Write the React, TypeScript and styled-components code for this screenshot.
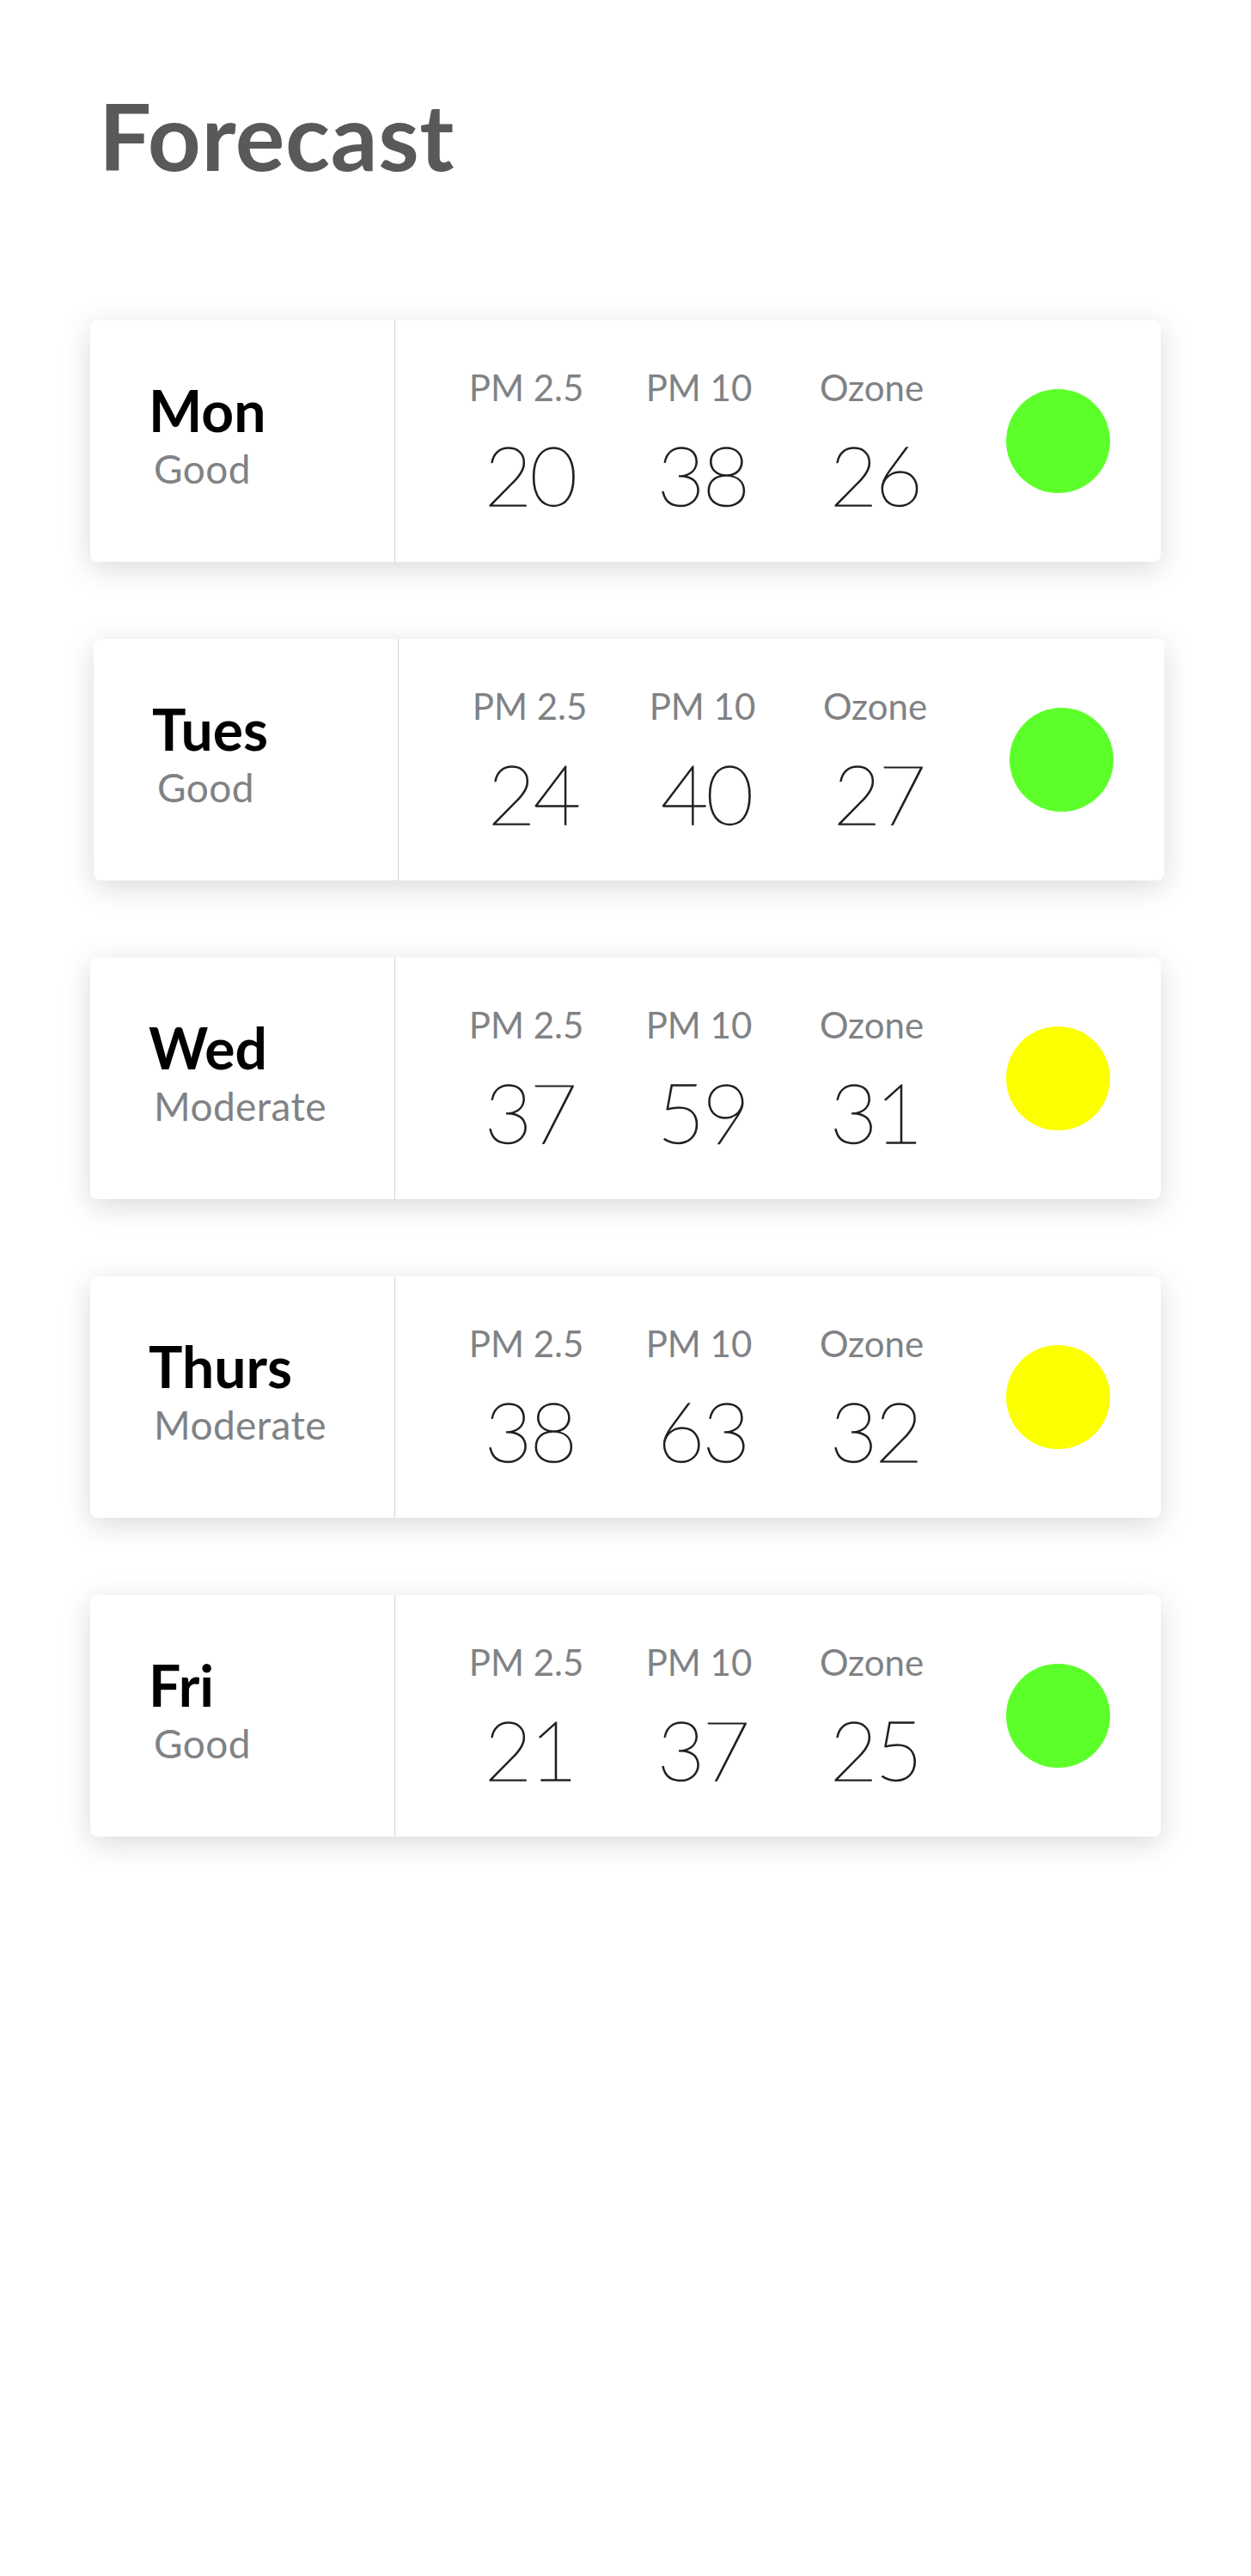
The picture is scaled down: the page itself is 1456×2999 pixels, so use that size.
import React from "react";
import styled, { createGlobalStyle } from "styled-components";

const GlobalStyle = createGlobalStyle`
  html, body {
    margin: 0;
    padding: 0;
    background: #ffffff;
  }
  body {
    font-family: "Lato", "Noto Sans", sans-serif;
  }
  * { box-sizing: border-box; }
`;

const Page = styled.div`
  width: 1456px;
  min-height: 2999px;
  padding: 103px 0 0 105px;
`;

const Title = styled.h1`
  margin: 0 0 162px 10px;
  font-family: "Lato", sans-serif;
  font-weight: 700;
  font-size: 108px;
  line-height: 1;
  color: #58595b;
  letter-spacing: 0.6px;
`;

const CardList = styled.div`
  display: flex;
  flex-direction: column;
  gap: 90px;
`;

const Card = styled.div<{ $shift?: number }>`
  display: flex;
  width: 1246px;
  height: 281px;
  margin-left: ${(p) => p.$shift ?? 0}px;
  background: #ffffff;
  border-radius: 8px;
  box-shadow: 0 8px 34px rgba(0, 0, 0, 0.15);
  overflow: hidden;
`;

const DaySection = styled.div`
  width: 355px;
  flex: none;
  padding: 72px 0 0 68px;
  border-right: 1px solid #d4d5d6;
  display: flex;
  flex-direction: column;
`;

const DayName = styled.div`
  font-family: "Lato", sans-serif;
  font-weight: 700;
  font-size: 66px;
  line-height: 1;
  color: #000000;
`;

const Quality = styled.div`
  margin: 12px 0 0 6px;
  font-family: "Lato", sans-serif;
  font-weight: 400;
  font-size: 46px;
  line-height: 1;
  letter-spacing: 0.4px;
  color: #808285;
`;

const Readings = styled.div`
  flex: 1;
  display: flex;
  align-items: flex-start;
  padding: 57px 59px 0 52px;
`;

const Metric = styled.div`
  width: 201px;
  display: flex;
  flex-direction: column;
  align-items: center;
`;

const MetricLabel = styled.div`
  font-family: "Lato", sans-serif;
  font-weight: 400;
  font-size: 42px;
  line-height: 1;
  color: #808285;
  white-space: nowrap;
`;

const MetricValue = styled.div`
  margin-top: 32px;
  padding-left: 8px;
  font-family: "Lato", sans-serif;
  font-weight: 200;
  font-size: 96px;
  line-height: 1;
  letter-spacing: -3px;
  color: #231f20;
  -webkit-text-stroke: 1.4px #231f20;
`;

const StatusDot = styled.div<{ $color: string }>`
  margin-left: auto;
  align-self: center;
  margin-top: -57px;
  width: 121px;
  height: 121px;
  border-radius: 50%;
  background: ${(p) => p.$color};
`;

type Day = {
  name: string;
  quality: string;
  pm25: number;
  pm10: number;
  ozone: number;
  color: string;
  shift?: number;
};

const GREEN = "#5dff2b";
const YELLOW = "#fcff00";

const days: Day[] = [
  { name: "Mon", quality: "Good", pm25: 20, pm10: 38, ozone: 26, color: GREEN },
  { name: "Tues", quality: "Good", pm25: 24, pm10: 40, ozone: 27, color: GREEN, shift: 4 },
  { name: "Wed", quality: "Moderate", pm25: 37, pm10: 59, ozone: 31, color: YELLOW },
  { name: "Thurs", quality: "Moderate", pm25: 38, pm10: 63, ozone: 32, color: YELLOW },
  { name: "Fri", quality: "Good", pm25: 21, pm10: 37, ozone: 25, color: GREEN },
];

export default function App() {
  return (
    <>
      <GlobalStyle />
      <Page>
        <Title>Forecast</Title>
        <CardList>
          {days.map((d) => (
            <Card key={d.name} $shift={d.shift}>
              <DaySection>
                <DayName>{d.name}</DayName>
                <Quality>{d.quality}</Quality>
              </DaySection>
              <Readings>
                <Metric>
                  <MetricLabel>PM 2.5</MetricLabel>
                  <MetricValue>{d.pm25}</MetricValue>
                </Metric>
                <Metric>
                  <MetricLabel>PM 10</MetricLabel>
                  <MetricValue>{d.pm10}</MetricValue>
                </Metric>
                <Metric>
                  <MetricLabel>Ozone</MetricLabel>
                  <MetricValue>{d.ozone}</MetricValue>
                </Metric>
                <StatusDot $color={d.color} />
              </Readings>
            </Card>
          ))}
        </CardList>
      </Page>
    </>
  );
}
